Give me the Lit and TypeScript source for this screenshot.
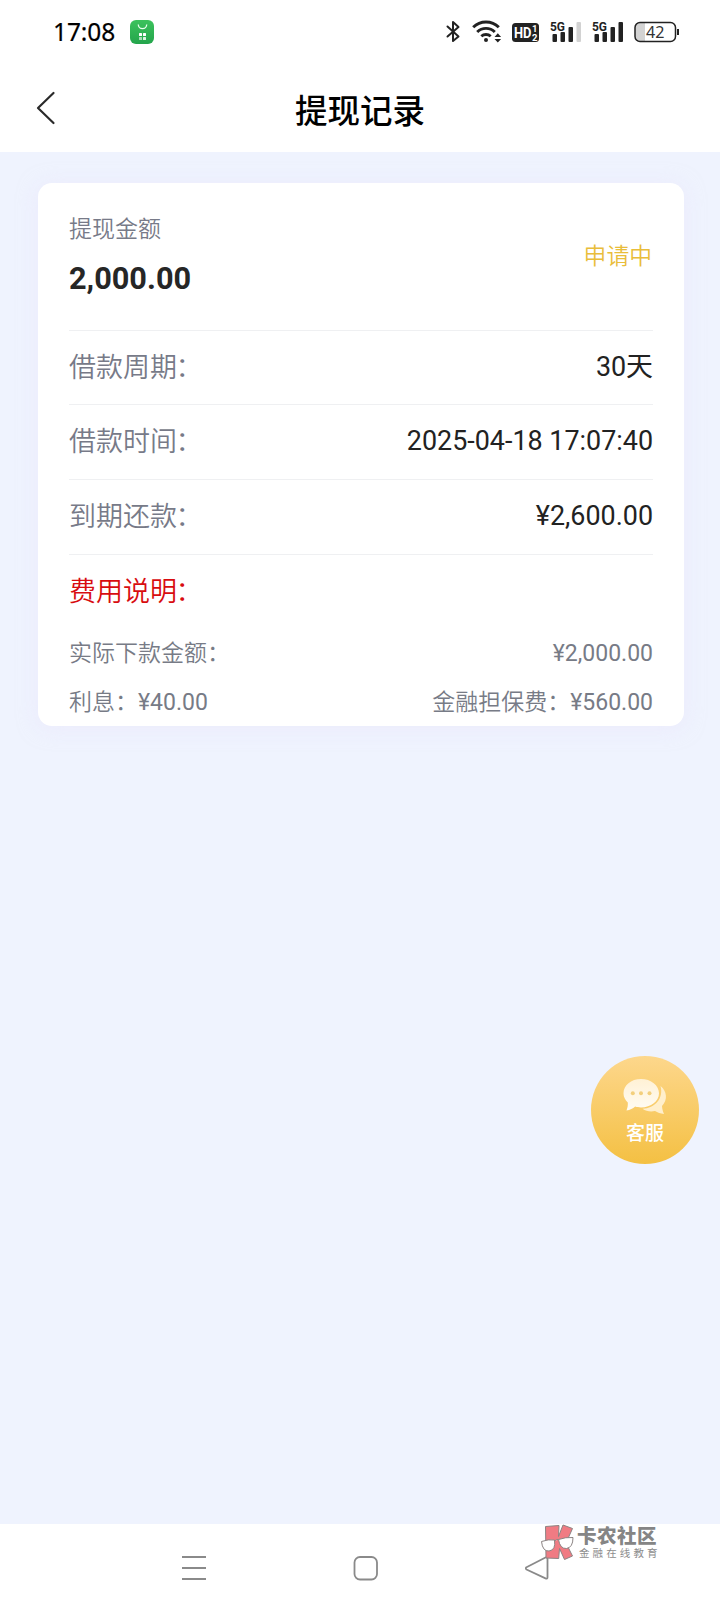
import { LitElement, html, css } from "lit";
import { customElement, property } from "lit/decorators.js";

@customElement("status-bar")
class StatusBar extends LitElement {
  static styles = css`
    :host { display: flex; align-items: center; height: 64px; padding: 0 40px 0 53px; box-sizing: border-box; color: #222; }
    .time { font: 400 24.5px/64px "Noto Sans", sans-serif; color: #000; -webkit-text-stroke: 0.2px #000; letter-spacing: -0.1px; width: 77px; }
    .grow { flex: 1; }
    svg { display: block; }
    .t5 { font: 700 13.5px Roboto, sans-serif; }
    .hd { font: 700 14.5px Roboto, sans-serif; fill: #fff; }
    .hs { font: 700 9.5px Roboto, sans-serif; fill: #fff; }
    .bat { font: 400 16px "Noto Sans", sans-serif; }
  `;
  signal(last: string) {
    return html`<svg width="42" height="26" viewBox="0 0 42 26" fill="#222">
      <text class="t5" x="0" y="11.500" textLength="15" lengthAdjust="spacingAndGlyphs">5G</text>
      <rect x="2.500" y="15" width="4.500" height="8" rx="1" />
      <rect x="10.500" y="13" width="4.500" height="10" rx="1" />
      <rect x="18.500" y="8" width="4.500" height="15" rx="1" />
      <rect x="26.500" y="3" width="4.500" height="20" rx="1" fill=${last} />
    </svg>`;
  }
  render() {
    return html`
      <span class="time">17:08</span>
      <svg width="24" height="24" viewBox="0 0 24 24">
        <defs><linearGradient id="g" x1="0" y1="0" x2="0" y2="1"><stop stop-color="#3cc25c" /><stop offset="1" stop-color="#24a54c" /></linearGradient></defs>
        <rect width="24" height="24" rx="6" fill="url(#g)" />
        <path d="M8.300 4.500a4.200 4.200 0 0 0 8.400 0" fill="none" stroke="#e9ffee" stroke-width="1.300" />
        <g fill="#fff"><rect x="9" y="13" width="3" height="3" rx=".5" /><rect x="13" y="13" width="3" height="3" rx=".5" /><rect x="9" y="17" width="3" height="3" rx=".5" opacity=".6" /><rect x="13" y="17" width="3" height="3" rx=".5" opacity=".85" /></g>
      </svg>
      <span class="grow"></span>
      <svg width="26" height="26" viewBox="0 0 26 26" fill="none" stroke="#222" stroke-width="2" stroke-linejoin="round" stroke-linecap="round">
        <path d="M1.500 7.500l11 10L7 22V3l5.500 5L1.500 17.500" />
      </svg>
      <svg width="40" height="26" viewBox="0 0 40 26" fill="none" stroke="#222" stroke-width="2.900">
        <path d="M1.200 8.300a18 18 0 0 1 25.600 0M5.200 13a12.500 12.500 0 0 1 17.600 0M9.300 17.300a7 7 0 0 1 9.400 0" />
        <circle cx="14" cy="21" r="2" fill="#222" stroke="none" />
        <path d="M22.500 18l3.300-3.800 3.300 3.800zM22.500 20l3.300 3.500 3.300-3.500z" fill="#222" stroke="none" />
      </svg>
      <svg width="38" height="26" viewBox="0 0 38 26">
        <rect x="0" y="4" width="27" height="19" rx="3.500" fill="#222" />
        <text class="hd" x="2" y="18.800" textLength="17.500" lengthAdjust="spacingAndGlyphs">HD</text>
        <text class="hs" x="20" y="13">1</text><text class="hs" x="20" y="21.500">2</text>
      </svg>
      ${this.signal("#d2d2d2")} ${this.signal("#222")}
      <svg width="46" height="26" viewBox="0 0 46 26">
        <path d="M4 4h7v18H4a3 3 0 0 1-3-3V7a3 3 0 0 1 3-3z" fill="#d3d3d3" />
        <rect x="1" y="3.500" width="40.500" height="19" rx="5" fill="none" stroke="#222" stroke-width="1.500" />
        <path d="M44 10v6" stroke="#222" stroke-width="2" />
        <text class="bat" x="12" y="18.800" fill="#333" textLength="18.500" lengthAdjust="spacingAndGlyphs">42</text>
      </svg>`;
  }
}

@customElement("info-row")
class InfoRow extends LitElement {
  @property() label = "";
  @property() value = "";
  static styles = css`
    :host { display: flex; justify-content: space-between; align-items: center; height: 75px; box-sizing: border-box; border-bottom: 1px solid #eff0f2; font: 400 27px/1 Roboto, "Noto Sans CJK SC", sans-serif; }
    .label { color: #777a88; font-weight: 350; }
    .colon { margin-left: -1.500px; }
    .value { color: #222; font-size: 26.900px; padding-bottom: 1px; }
  `;
  render() {
    return html`<span class="label">${this.label}<span class="colon">：</span></span><span class="value">${this.value}</span>`;
  }
}

@customElement("app-root")
class AppRoot extends LitElement {
  static styles = css`
    :host { display: flex; flex-direction: column; position: relative; width: 720px; height: 1612px; overflow: hidden; background: #fff; font-family: Roboto, "Noto Sans CJK SC", sans-serif; }
    .header { display: grid; grid-template-columns: 80px 1fr 80px; align-items: center; height: 88px; flex: none; }
    .back { display: block; margin-left: 35px; }
    .title { text-align: center; font: 500 32.500px/40px "Noto Sans CJK SC", sans-serif; color: #000; padding-top: 1px; }
    .main { flex: 1; background: #eff3fe; padding: 31px 36px 0 38px; }
    .card { height: 543px; box-sizing: border-box; background: #fff; border-radius: 14px; padding: 0 31px; box-shadow: 0 2px 20px rgba(234, 228, 252, 0.5); }
    .top { display: flex; justify-content: space-between; align-items: center; height: 148px; box-sizing: border-box; border-bottom: 1px solid #eff0f2; }
    .caption { font-size: 23px; line-height: 30px; color: #777a88; font-weight: 350; }
    .amount { font-size: 30.700px; line-height: 36px; font-weight: 700; color: #262626; margin-top: 16px; padding-bottom: 2px; }
    .state { font-size: 22.800px; line-height: 30px; color: #e9bd3a; font-weight: 350; padding-right: 1px; }
    .first { height: 74px; padding-top: 1px; }
    .fee-title { font-size: 27px; line-height: 74px; height: 74px; color: #d80c10; font-weight: 350; }
    .colon { margin-left: -1.500px; }
    .fee { display: flex; justify-content: space-between; align-items: center; font-size: 23px; line-height: 49px; height: 49px; color: #777b86; font-weight: 350; }
    .num { font-weight: 400; }
    .service { position: absolute; left: 591px; top: 1056px; width: 108px; height: 108px; border-radius: 50%; background: linear-gradient(#fdd78c, #f4c043); display: flex; flex-direction: column; align-items: center; color: #fff; }
    .bubbles { display: block; margin-top: 22px; }
    .service-text { font: 500 19px/24px "Noto Sans CJK SC", sans-serif; margin-top: 4px; }
    .nav { display: flex; align-items: flex-start; height: 88px; flex: none; padding: 31px 0 0 181px; gap: 146px; box-sizing: border-box; }
    .mark { position: absolute; left: 540px; top: 1523px; display: flex; }
    .mark-text { padding-left: 1px; color: #8d8d8d; }
    .mark-name { font: 900 19.500px/24px "Noto Sans CJK SC", sans-serif; color: #858585; letter-spacing: 0.500px; }
    .mark-sub { font: 400 10.500px/12px "Noto Sans CJK SC", sans-serif; letter-spacing: 3.100px; padding-left: 2px; }
  `;
  render() {
    return html`
      <status-bar></status-bar>
      <div class="header">
        <svg class="back" width="24" height="36" viewBox="0 0 24 36" fill="none" stroke="#2a2a2a" stroke-width="2.200" stroke-linecap="round" stroke-linejoin="round"><path d="M18.500 3L3 18l15.500 15" /></svg>
        <div class="title">提现记录</div>
      </div>
      <div class="main">
        <div class="card">
          <div class="top">
            <div><div class="caption">提现金额</div><div class="amount">2,000.00</div></div>
            <div class="state">申请中</div>
          </div>
          <info-row class="first" label="借款周期" value="30天"></info-row>
          <info-row label="借款时间" value="2025-04-18 17:07:40"></info-row>
          <info-row label="到期还款" value="¥2,600.00"></info-row>
          <div class="fee-title">费用说明<span class="colon">：</span></div>
          <div class="fee"><span>实际下款金额：</span><span class="num">¥2,000.00</span></div>
          <div class="fee"><span>利息：<span class="num">¥40.00</span></span><span>金融担保费：<span class="num">¥560.00</span></span></div>
        </div>
      </div>
      <div class="nav">
        <svg width="26" height="26" viewBox="0 0 26 26" stroke="#8a8a8a" stroke-width="1.800"><path d="M1 2h24M1 13h24M1 24h24" /></svg>
        <svg width="26" height="26" viewBox="0 0 26 26" fill="none" stroke="#8a8a8a" stroke-width="1.800"><rect x="1.500" y="2" width="22.500" height="22.500" rx="5.500" /></svg>
        <svg width="26" height="28" viewBox="0 0 26 28" fill="none" stroke="#8a8a8a" stroke-width="1.800" stroke-linejoin="round"><path d="M1.500 12.200L20.500 2.500q2-.8 2 1.200v18.500q0 2-2 1.200L1.500 14.500q-1.500-1.100 0-2.300z" /></svg>
      </div>
      <div class="service">
        <svg class="bubbles" width="46" height="38" viewBox="0 0 46 38">
          <defs><linearGradient id="b" x1="0" y1="0" x2="0" y2="1"><stop stop-color="#fff1d5" /><stop offset="1" stop-color="#fffcf4" /></linearGradient></defs>
          <path d="M38.500 8c6.500 5 7.500 14 1.500 20 .2 3 .8 5 2 8-3.500-.3-6.500-1.500-9-3-4.500 1-9 .2-12.500-2.300C33 30.500 42 20 38.500 8z" fill="#ffefcc" />
          <path d="M19 1c10 0 18 6.300 18 14.300S29 29.500 19 29.500c-2.200 0-4-.2-5.800-.9-2.500 2.200-5 3.400-8.700 3.900 1-2.500 1.500-5 1.300-8C3.200 22 1.500 19 1.500 15.300 1.500 7.300 9 1 19 1z" fill="url(#b)" />
          <circle cx="10.800" cy="15.300" r="2" fill="#f3cf7d" /><circle cx="19" cy="15.300" r="2" fill="#f3cf7d" /><circle cx="27.500" cy="15.300" r="2" fill="#f3cf7d" />
        </svg>
        <div class="service-text">客服</div>
      </div>
      <div class="mark">
        <svg width="36" height="40" viewBox="0 0 36 40" stroke="#8c8484" stroke-width="1" stroke-linejoin="round">
          <path d="M5.500 3.500l13.500-1-.5 11L23 2l9.500 3.500L26 20l6.500 13-8 3.500-5-11-.8 10L6 35z" fill="#f07b83" />
          <path d="M1.500 18.500q7-2.500 13-1.500 1.500 10-5.500 11-6.500.5-7.500-9.500zM18.500 16.500q7-2.500 14.500-2 0 10-6.500 11-6.500.5-8-9zM14.500 18q2-2 4-1.500" fill="#fff" />
        </svg>
        <div class="mark-text"><div class="mark-name">卡农社区</div><div class="mark-sub">金融在线教育</div></div>
      </div>`;
  }
}
